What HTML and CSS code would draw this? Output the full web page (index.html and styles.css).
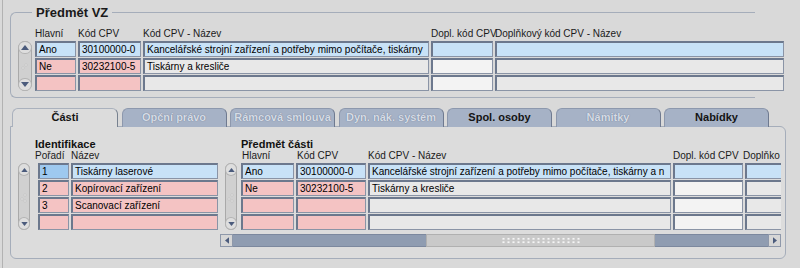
FILE: index.html
```html
<!DOCTYPE html>
<html lang="cs">
<head>
  <meta charset="UTF-8" />
  <title>Předmět VZ</title>
  <link rel="stylesheet" href="styles.css">
</head>
<body>
  <div class="window">
    <fieldset class="group">
      <legend>Předmět VZ</legend>
      <div class="heads heads-vz">
        <span class="vz-hl">Hlavní</span>
        <span class="vz-kod">Kód CPV</span>
        <span class="vz-naz">Kód CPV - Název</span>
        <span class="vz-dopl">Dopl. kód CPV</span>
        <span class="vz-dnaz">Doplňkový kód CPV - Název</span>
      </div>
      <div class="tbody">
        <div class="vscroll vscroll-wide">
          <span class="vbtn"><svg width="8" height="5" viewBox="0 0 8 5"><path d="M0 5 L4 0 L8 5 Z" fill="#4b5b7c"/></svg></span>
          <span class="grip"><svg width="8" height="8" viewBox="0 0 8 8"><circle cx="2" cy="6" r="1" fill="#fff" stroke="#a8a8a8" stroke-width=".5"/><circle cx="5" cy="3" r="1" fill="#fff" stroke="#a8a8a8" stroke-width=".5"/></svg></span>
          <span class="vbtn"><svg width="8" height="5" viewBox="0 0 8 5"><path d="M0 0 L4 5 L8 0 Z" fill="#4b5b7c"/></svg></span>
        </div>
        <div class="rows">
          <div class="row">
            <span class="cell vz-hl blue">Ano</span>
            <span class="cell vz-kod blue">30100000-0</span>
            <span class="cell vz-naz blue">Kancelářské strojní zařízení a potřeby mimo počítače, tiskárny</span>
            <span class="cell vz-dopl blue"></span>
            <span class="cell vz-dnaz blue"></span>
          </div>
          <div class="row">
            <span class="cell vz-hl pink">Ne</span>
            <span class="cell vz-kod pink">30232100-5</span>
            <span class="cell vz-naz">Tiskárny a kresliče</span>
            <span class="cell vz-dopl white"></span>
            <span class="cell vz-dnaz"></span>
          </div>
          <div class="row">
            <span class="cell vz-hl pink"></span>
            <span class="cell vz-kod pink"></span>
            <span class="cell vz-naz"></span>
            <span class="cell vz-dopl white"></span>
            <span class="cell vz-dnaz"></span>
          </div>
        </div>
      </div>
    </fieldset>

    <div class="tabs">
      <div class="tab active">Části</div>
      <div class="tab off">Opční právo</div>
      <div class="tab off">Rámcová smlouva</div>
      <div class="tab off">Dyn. nák. systém</div>
      <div class="tab">Spol. osoby</div>
      <div class="tab off">Námitky</div>
      <div class="tab">Nabídky</div>
    </div>

    <div class="panel">
      <div class="sub sub-left">
        <div class="sub-title">Identifikace</div>
        <div class="heads heads-id">
          <span class="h-por">Pořadí</span>
          <span>Název</span>
        </div>
        <div class="tbody tbody-id">
          <div class="vscroll">
            <span class="vbtn"><svg width="7" height="4" viewBox="0 0 8 5"><path d="M0 5 L4 0 L8 5 Z" fill="#4b5b7c"/></svg></span>
            <span class="grip"><svg width="8" height="12" viewBox="0 0 8 12"><circle cx="2" cy="8" r="1" fill="#fff" stroke="#a8a8a8" stroke-width=".5"/><circle cx="5" cy="4" r="1" fill="#fff" stroke="#a8a8a8" stroke-width=".5"/><circle cx="5" cy="10" r="1" fill="#fff" stroke="#a8a8a8" stroke-width=".5"/></svg></span>
            <span class="vbtn"><svg width="7" height="4" viewBox="0 0 8 5"><path d="M0 0 L4 5 L8 0 Z" fill="#4b5b7c"/></svg></span>
          </div>
          <div class="rows">
            <div class="row">
              <span class="cell id-por focus">1</span>
              <span class="cell id-naz blue">Tiskárny laserové</span>
            </div>
            <div class="row">
              <span class="cell id-por pink">2</span>
              <span class="cell id-naz pink">Kopírovací zařízení</span>
            </div>
            <div class="row">
              <span class="cell id-por pink">3</span>
              <span class="cell id-naz pink">Scanovací zařízení</span>
            </div>
            <div class="row">
              <span class="cell id-por pink"></span>
              <span class="cell id-naz pink"></span>
            </div>
          </div>
        </div>
      </div>

      <div class="sub sub-right">
        <div class="sub-title">Předmět části</div>
        <div class="heads heads-pc">
          <span class="pc-hl">Hlavní</span>
          <span class="pc-kod">Kód CPV</span>
          <span class="pc-naz">Kód CPV - Název</span>
          <span class="pc-dopl">Dopl. kód CPV</span>
          <span class="pc-dnaz">Doplňko</span>
        </div>
        <div class="tbody tbody-pc">
          <div class="vscroll">
            <span class="vbtn"><svg width="7" height="4" viewBox="0 0 8 5"><path d="M0 5 L4 0 L8 5 Z" fill="#4b5b7c"/></svg></span>
            <span class="grip"><svg width="8" height="12" viewBox="0 0 8 12"><circle cx="2" cy="8" r="1" fill="#fff" stroke="#a8a8a8" stroke-width=".5"/><circle cx="5" cy="4" r="1" fill="#fff" stroke="#a8a8a8" stroke-width=".5"/><circle cx="5" cy="10" r="1" fill="#fff" stroke="#a8a8a8" stroke-width=".5"/></svg></span>
            <span class="vbtn"><svg width="7" height="4" viewBox="0 0 8 5"><path d="M0 0 L4 5 L8 0 Z" fill="#4b5b7c"/></svg></span>
          </div>
          <div class="rows">
            <div class="row">
              <span class="cell pc-hl blue">Ano</span>
              <span class="cell pc-kod blue">30100000-0</span>
              <span class="cell pc-naz blue">Kancelářské strojní zařízení a potřeby mimo počítače, tiskárny a n</span>
              <span class="cell pc-dopl blue"></span>
              <span class="cell pc-dnaz blue"></span>
            </div>
            <div class="row">
              <span class="cell pc-hl pink">Ne</span>
              <span class="cell pc-kod pink">30232100-5</span>
              <span class="cell pc-naz">Tiskárny a kresliče</span>
              <span class="cell pc-dopl white"></span>
              <span class="cell pc-dnaz"></span>
            </div>
            <div class="row">
              <span class="cell pc-hl pink"></span>
              <span class="cell pc-kod pink"></span>
              <span class="cell pc-naz"></span>
              <span class="cell pc-dopl white"></span>
              <span class="cell pc-dnaz"></span>
            </div>
            <div class="row">
              <span class="cell pc-hl pink"></span>
              <span class="cell pc-kod pink"></span>
              <span class="cell pc-naz"></span>
              <span class="cell pc-dopl white"></span>
              <span class="cell pc-dnaz"></span>
            </div>
          </div>
        </div>
        <div class="hscroll">
          <span class="hbtn"><svg width="4" height="7" viewBox="0 0 5 8"><path d="M5 0 L0 4 L5 8 Z" fill="#4b5b7c"/></svg></span>
          <span class="track track-a"></span>
          <span class="thumb"><span class="thumb-grip"></span></span>
          <span class="track track-b"></span>
          <span class="hbtn"><svg width="4" height="7" viewBox="0 0 5 8"><path d="M0 0 L5 4 L0 8 Z" fill="#4b5b7c"/></svg></span>
        </div>
      </div>
    </div>
  </div>
</body>
</html>
```

FILE: styles.css
```css
* {
  box-sizing: border-box;
  margin: 0;
  padding: 0;
}

body {
  background: #d9d9d9;
  font-family: "Liberation Sans", Arial, sans-serif;
  font-size: 10px;
  color: #111;
  overflow: hidden;
}

.window {
  margin-left: 2px;
  border-left: 1px solid #b2b2b2;
  height: 268px;
  padding: 5px 0 0 7px;
}

/* Předmět VZ group */
.group {
  width: 745px;
  min-width: 0;
  border: 1px solid #a5adba;
  border-right: none;
  border-radius: 6px 0 0 6px;
  padding: 0 0 6px 7px;
  overflow: visible;
}

.group legend {
  margin-left: 14px;
  padding: 0 4px;
  font-size: 13px;
  line-height: 15px;
  font-weight: bold;
  color: #1a1a1a;
}

.heads {
  display: flex;
  gap: 2px;
  line-height: 12px;
  height: 12px;
  white-space: nowrap;
  color: #1a1a1a;
}

.heads span {
  flex: none;
}

.heads-vz {
  margin: 8px 0 1px 17px;
}

.tbody {
  display: flex;
  gap: 3px;
}

.rows {
  display: flex;
  flex-direction: column;
  gap: 1px;
}

.row {
  display: flex;
  gap: 2px;
  height: 16px;
}

.cell {
  flex: none;
  display: block;
  height: 16px;
  background: #e8e8e8;
  border: 1px solid #8a94a6;
  border-top: 2px solid #6c788d;
  border-left: 2px solid #6c788d;
  padding-left: 2px;
  line-height: 13px;
  white-space: nowrap;
  overflow: hidden;
  color: #000;
}

.cell.blue { background: #c8e2f7; }
.cell.pink { background: #f4c3c3; }
.cell.white { background: #f3f3f3; }
.cell.focus { background: #9ec9ef; }

.vz-hl { width: 41px; }
.vz-kod { width: 63px; }
.vz-naz { width: 286px; }
.vz-dopl { width: 62px; }
.vz-dnaz { width: 289px; }

/* vertical scroller */
.vscroll {
  flex: none;
  width: 12px;
  display: flex;
  flex-direction: column;
  justify-content: space-between;
  align-items: center;
  background: #d0d0d0;
  border: 1px solid #a9a9a9;
  border-radius: 6px;
}

.vscroll-wide {
  width: 14px;
  border-radius: 7px;
}

.vbtn {
  width: 100%;
  height: 11px;
  display: flex;
  align-items: center;
  justify-content: center;
  background: #dedede;
  border-radius: 6px;
  box-shadow: 0 0 0 1px #b4b4b4;
}

.grip {
  display: flex;
}

/* tabs */
.tabs {
  display: flex;
  margin: 10px 0 0 2px;
  height: 18px;
}

.tab {
  flex: none;
  width: 105px;
  margin-right: 3.5px;
  height: 19px;
  border: 1px solid #8d98ad;
  border-bottom: none;
  border-right-color: #6f7a90;
  border-radius: 6px 6px 0 0;
  background: #a6b2c6;
  font-size: 11px;
  font-weight: bold;
  line-height: 17px;
  text-align: center;
  color: #141414;
}

.tab.off {
  color: #d6dce6;
  text-shadow: 0 0 1px #5f6c86;
}

.tab.active {
  width: 106px;
  position: relative;
  background: #dcdcdc;
  border-color: #aab1bd;
  border-right-color: #77818f;
}

/* bottom panel */
.panel {
  width: 776px;
  height: 133px;
  border: 1px solid #a5adba;
  border-radius: 0 6px 6px 6px;
  background: #dcdcdc;
  display: flex;
  gap: 2px;
  padding: 11px 0 0 7px;
}

.sub-title {
  font-size: 11px;
  font-weight: bold;
  line-height: 12px;
  color: #111;
  white-space: nowrap;
}

.sub-left {
  width: 200px;
  flex: none;
}

.sub-left .sub-title {
  margin-left: 17px;
}

.heads-id {
  margin: 0 0 1px 17px;
  gap: 0;
}

.h-por {
  width: 36px;
}

.tbody-id {
  gap: 8px;
}

.id-por { width: 31px; }
.id-naz { width: 147px; }

.sub-right {
  width: 561px;
  flex: none;
  overflow: hidden;
}

.sub-right .sub-title {
  margin-left: 21px;
}

.heads-pc {
  margin: 0 0 1px 22px;
}

.tbody-pc {
  padding-left: 5px;
  gap: 4px;
}

.pc-hl { width: 53px; }
.pc-kod { width: 70px; }
.pc-naz { width: 303px; }
.pc-dopl { width: 70px; }
.pc-dnaz { width: 200px; }

.heads-pc .pc-naz,
.heads-pc .pc-dopl {
  margin-left: -1px;
  margin-right: 1px;
}

.heads-pc .pc-dnaz {
  width: 37px;
  margin-left: -3px;
}

/* horizontal scroller */
.hscroll {
  display: flex;
  height: 13px;
  margin-top: 4px;
  width: 561px;
}

.hbtn {
  flex: none;
  width: 13px;
  display: flex;
  align-items: center;
  justify-content: center;
  background: #d6d6d6;
  border: 1px solid #8e98aa;
}

.track {
  background: #8f9cb1;
  border-top: 1px solid #7c889e;
  border-bottom: 1px solid #7c889e;
}

.track-a {
  width: 193px;
}

.track-b {
  flex: 1;
}

.thumb {
  flex: none;
  width: 229px;
  background: #c9c9c9;
  border: 1px solid #b0b0b0;
  display: flex;
  align-items: center;
  justify-content: center;
}

.thumb-grip {
  width: 80px;
  height: 7px;
  background-image: radial-gradient(circle, #f6f6f6 0.9px, transparent 1.3px);
  background-size: 5px 3.5px;
}
```
